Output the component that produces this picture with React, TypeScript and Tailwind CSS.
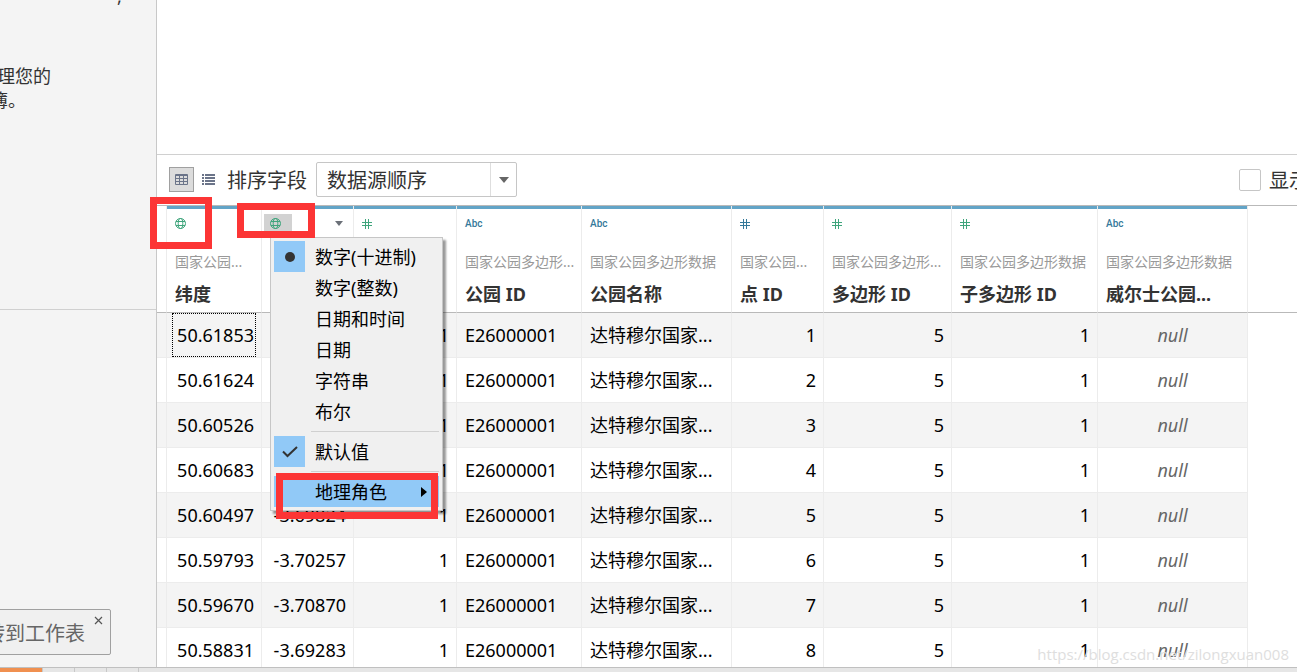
import React from "react";

type Kind = "geo" | "number" | "text";

interface Column {
  kind: Kind;
  tone: string;
  source: string;
  name: string;
  width: string;
}

const GREEN = "text-[#3fa57c]";
const BLUE = "text-[#35799a]";

const columns: Column[] = [
  { kind: "geo", tone: GREEN, source: "国家公园...", name: "纬度", width: "w-[95px]" },
  { kind: "geo", tone: GREEN, source: "", name: "", width: "w-[92px]" },
  { kind: "number", tone: GREEN, source: "", name: "", width: "w-[103px]" },
  { kind: "text", tone: BLUE, source: "国家公园多边形...", name: "公园 ID", width: "w-[125px]" },
  { kind: "text", tone: BLUE, source: "国家公园多边形数据", name: "公园名称", width: "w-[150px]" },
  { kind: "number", tone: BLUE, source: "国家公园...", name: "点 ID", width: "w-[92px]" },
  { kind: "number", tone: GREEN, source: "国家公园多边形...", name: "多边形 ID", width: "w-[128px]" },
  { kind: "number", tone: GREEN, source: "国家公园多边形数据", name: "子多边形 ID", width: "w-[146px]" },
  { kind: "text", tone: BLUE, source: "国家公园多边形数据", name: "威尔士公园...", width: "w-[150px]" },
];

const rows = [
  { lat: "50.61853", lng: "", point: 1 },
  { lat: "50.61624", lng: "", point: 2 },
  { lat: "50.60526", lng: "", point: 3 },
  { lat: "50.60683", lng: "", point: 4 },
  { lat: "50.60497", lng: "-3.69824", point: 5 },
  { lat: "50.59793", lng: "-3.70257", point: 6 },
  { lat: "50.59670", lng: "-3.70870", point: 7 },
  { lat: "50.58831", lng: "-3.69283", point: 8 },
];

function GlobeIcon() {
  return (
    <svg className="size-[11px]" viewBox="0 0 11 11" fill="none" stroke="currentColor">
      <circle cx="5.5" cy="5.5" r="5" />
      <ellipse cx="5.5" cy="5.5" rx="2.3" ry="5" />
      <path d="M1 3.5H10M1 7.5H10" />
    </svg>
  );
}

function HashIcon() {
  return (
    <svg className="size-2.5" viewBox="0 0 10 10" fill="none" stroke="currentColor">
      <path d="M3.5 0V10M6.5 0V10M0 3.5H10M0 6.5H10" />
    </svg>
  );
}

function TypeIcon({ kind }: { kind: Kind }) {
  if (kind === "geo") return <GlobeIcon />;
  if (kind === "number") return <HashIcon />;
  return <span className="font-[Roboto,sans-serif] text-[10px] leading-3 font-medium">Abc</span>;
}

function MenuItem({ label, mark, active }: { label: string; mark?: "dot" | "check"; active?: boolean }) {
  return (
    <button
      type="button"
      role="menuitem"
      className={`flex h-[31px] w-full items-center gap-2.5 text-left text-lg leading-[31px] ${active ? "bg-[#91c9f7]" : ""}`}
    >
      <span className={`flex size-[31px] shrink-0 items-center justify-center ${mark ? "bg-[#91c9f7]" : ""}`}>
        {mark === "dot" && <span className="size-2.5 rounded-full bg-[#333]" />}
        {mark === "check" && (
          <svg className="h-3 w-4" viewBox="0 0 16 12" fill="none" stroke="#333" strokeWidth="2">
            <path d="M1 5.5L5.5 10L15 1" />
          </svg>
        )}
      </span>
      <span className="grow pt-0.5 whitespace-nowrap">{label}</span>
      {active && (
        <svg className="mr-3 h-2.5 w-1.5 shrink-0" viewBox="0 0 6 10">
          <path d="M0 0L6 5L0 10Z" fill="#000" />
        </svg>
      )}
    </button>
  );
}

function Separator() {
  return (
    <div className="flex h-[9px] items-center pl-[37px]">
      <div className="h-px w-full bg-[#d0d0d0]" />
    </div>
  );
}

function TypeMenu() {
  return (
    <div
      role="menu"
      className="absolute top-[31px] left-2 z-10 w-[173px] border border-[#c6c6c6] bg-[#f0f0f0] p-[3px] font-normal text-black shadow-[3px_3px_2px_rgba(0,0,0,0.4)]"
    >
      <MenuItem label="数字(十进制)" mark="dot" />
      <MenuItem label="数字(整数)" />
      <MenuItem label="日期和时间" />
      <MenuItem label="日期" />
      <MenuItem label="字符串" />
      <MenuItem label="布尔" />
      <Separator />
      <MenuItem label="默认值" mark="check" />
      <Separator />
      <MenuItem label="地理角色" active />
      <div className="absolute top-[235px] left-[5px] h-[46px] w-[162px] border-7 border-[#fc3535]" />
    </div>
  );
}

function HeaderCell({ column, index }: { column: Column; index: number }) {
  const open = index === 1;
  return (
    <th className="relative h-[107px] border-r border-b border-r-[#ececec] border-b-[#b9b9b9] p-0 text-left align-top">
      <div className="h-[3px] bg-[#62a4c7]" />
      <div className="flex h-[29px] items-center justify-between pr-2.5 pl-2">
        <button
          type="button"
          aria-label="数据类型"
          className={`flex h-5 items-center ${column.tone} ${open ? "-ml-1.5 w-7 bg-[#d2d2d2] pl-1.5" : ""}`}
        >
          <TypeIcon kind={column.kind} />
        </button>
        {open && (
          <svg className="h-[5px] w-2" viewBox="0 0 8 5">
            <path d="M0 0H8L4 5Z" fill="#6b7078" />
          </svg>
        )}
      </div>
      <div className="mt-3.5 h-5 pl-2 text-sm leading-5 font-normal whitespace-nowrap text-[#999]">
        {column.source}
      </div>
      <div className="mt-2.5 pl-2 text-lg leading-6 font-bold whitespace-nowrap text-[#333]">{column.name}</div>
      {index === 0 && (
        <div className="absolute -top-[9px] -left-[17px] z-10 h-[52px] w-[62px] border-7 border-[#fc3535]" />
      )}
      {open && <TypeMenu />}
      {open && (
        <div className="absolute -top-[3px] -left-[25px] z-20 h-[35px] w-[78px] border-7 border-[#fc3535]" />
      )}
    </th>
  );
}

function DataTable() {
  const cell = "border-r border-b border-[#ececec] px-2";
  const measure = "border-r border-b border-[#ececec] px-[7px] text-right";
  return (
    <table className="w-full table-fixed border-separate border-spacing-0 text-lg text-black">
      <colgroup>
        <col className="w-2.5" />
        {columns.map((c, i) => (
          <col key={i} className={c.width} />
        ))}
        <col />
      </colgroup>
      <thead>
        <tr>
          <td className="border-r border-b border-r-[#ececec] border-b-[#b9b9b9]" />
          {columns.map((c, i) => (
            <HeaderCell key={i} column={c} index={i} />
          ))}
          <td className="border-b border-[#b9b9b9]" />
        </tr>
      </thead>
      <tbody>
        {rows.map((r, i) => {
          const tone = i % 2 === 0 ? "bg-[#f4f4f4]" : "bg-white";
          return (
            <tr key={r.lat} className="h-[45px] leading-6 whitespace-nowrap">
              <td className={`border-r border-b border-[#ececec] ${tone}`} />
              <td className={`${measure} ${tone}`}>
                {i === 0 ? (
                  <div className="-mx-0.5 flex h-11 items-center justify-end border border-dotted border-black pr-px">
                    {r.lat}
                  </div>
                ) : (
                  r.lat
                )}
              </td>
              <td className={`${measure} ${tone}`}>{r.lng}</td>
              <td className={`${measure} ${tone}`}>1</td>
              <td className={`${cell} ${tone}`}>E26000001</td>
              <td className={`${cell} ${tone}`}>达特穆尔国家...</td>
              <td className={`${measure} ${tone}`}>{r.point}</td>
              <td className={`${measure} ${tone}`}>5</td>
              <td className={`${measure} ${tone}`}>1</td>
              <td className={`${cell} text-center text-[#666] italic ${tone}`}>null</td>
              <td />
            </tr>
          );
        })}
      </tbody>
    </table>
  );
}

function Toolbar() {
  return (
    <div className="flex h-[52px] shrink-0 items-center border-y border-t-[#d0d0d0] border-b-[#b9b9b9] pb-px pl-3 text-xl text-[#333]">
      <button
        type="button"
        aria-label="网格"
        className="flex size-[25px] items-center justify-center border border-[#a0a0a0] bg-[#dcdcdc]"
      >
        <svg className="h-[11px] w-[13px]" viewBox="0 0 13 11" fill="none" stroke="#6b7489">
          <path d="M0.5 0.5H12.5V10.5H0.5ZM0.5 1.5H12.5M0.5 4.5H12.5M0.5 7.5H12.5M4.5 1V10.5M8.5 1V10.5" />
        </svg>
      </button>
      <button type="button" aria-label="列表" className="ml-2 flex items-center">
        <svg className="h-[11px] w-[13px]" viewBox="0 0 13 11" fill="#6b7489">
          <path d="M0 0H2V2H0ZM3 0H13V2H3ZM0 3H2V5H0ZM3 3H13V5H3ZM0 6H2V8H0ZM3 6H13V8H3ZM0 9H2V11H0ZM3 9H13V11H3Z" />
        </svg>
      </button>
      <label htmlFor="sort" className="ml-3 pt-0.5 leading-7 whitespace-nowrap">
        排序字段
      </label>
      <div className="relative ml-[9px] h-[35px] w-[201px] shrink-0">
        <select
          id="sort"
          className="h-full w-full appearance-none rounded-xs border border-[#c6c6c6] bg-white pt-0.5 pl-2.5 text-xl text-[#333]"
        >
          <option>数据源顺序</option>
        </select>
        <span className="pointer-events-none absolute inset-y-px right-px flex w-[26px] items-center justify-center border-l border-[#dedede]">
          <svg className="h-1.5 w-2.5" viewBox="0 0 10 6">
            <path d="M0 0H10L5 6Z" fill="#666" />
          </svg>
        </span>
      </div>
      <label className="ml-auto flex w-[58px] shrink-0 items-center gap-2 overflow-hidden leading-7 whitespace-nowrap">
        <input
          type="checkbox"
          className="size-[22px] shrink-0 appearance-none rounded-xs border border-[#c6c6c6] bg-white"
        />
        <span className="pt-0.5">显示</span>
      </label>
    </div>
  );
}

function Sidebar() {
  return (
    <aside className="flex w-[157px] shrink-0 flex-col overflow-hidden border-r border-[#c8c8c8] bg-[#f4f4f4] text-lg leading-6 whitespace-nowrap text-[#333]">
      <div className="h-[310px] shrink-0 border-b border-[#d0d0d0]">
        <div className="flex h-16 items-start pl-[117px]">
          <div className="-mt-4">,</div>
        </div>
        <div className="flex w-[51px] justify-end">理您的</div>
        <div className="flex w-[26px] justify-end">簿。</div>
      </div>
      <button
        type="button"
        className="mt-auto mb-3 -ml-5 flex h-[46px] w-[131px] items-start rounded-xs border border-[#a0a0a0] bg-[#f0f0f0] pr-[7px] pl-1 text-[#666]"
      >
        <span className="pt-2 text-xl leading-8">转到工作表</span>
        <svg className="mt-1.5 ml-auto size-[9px] shrink-0" viewBox="0 0 9 9" fill="none" stroke="#555" strokeWidth="1.2">
          <path d="M1 1L8 8M8 1L1 8" />
        </svg>
      </button>
    </aside>
  );
}

export default function App() {
  return (
    <div className="relative flex h-screen flex-col overflow-hidden bg-white font-['Noto_Sans','Noto_Sans_CJK_SC',sans-serif]">
      <div className="flex min-h-0 grow">
        <Sidebar />
        <main className="flex min-w-0 grow flex-col">
          <div className="h-[154px] shrink-0" />
          <Toolbar />
          <DataTable />
        </main>
      </div>
      <footer className="relative z-10 flex h-[5px] shrink-0 border-t border-[#c0c0c0] bg-[#e6e6e6]">
        <div className="w-[42px] bg-[#f09050]" />
        <div className="w-[33px] border-x border-[#c8c8c8]" />
        <div className="w-8 border-r border-[#c8c8c8]" />
        <div className="w-8 border-r border-[#c8c8c8]" />
      </footer>
      <div className="absolute right-2 bottom-2 z-20 font-['Open_Sans',sans-serif] text-[15px] leading-5 text-[#dedede]">
        https://blog.csdn.net/zilongxuan008
      </div>
    </div>
  );
}
